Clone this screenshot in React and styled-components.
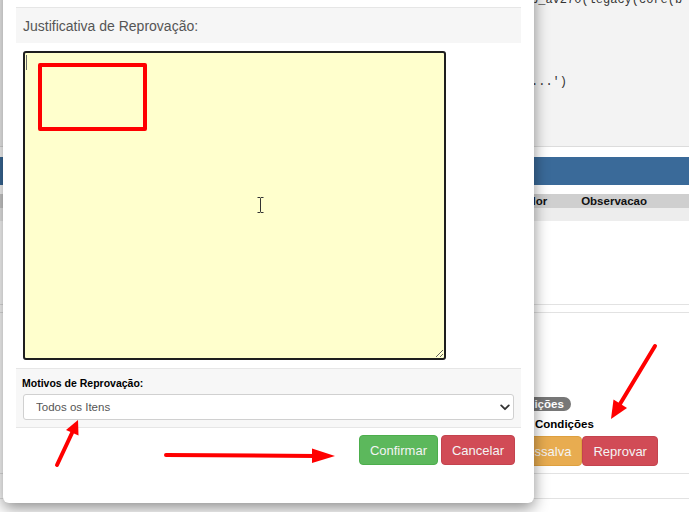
import React from 'react'
import styled, { createGlobalStyle } from 'styled-components'

const GlobalStyle = createGlobalStyle`
  html, body {
    margin: 0;
    padding: 0;
    background: #fff;
    font-family: "Liberation Sans", Arial, sans-serif;
    overflow: hidden;
  }
`

const App = () => (
  <Screen>
    <GlobalStyle />
    <Page>
      <CodePanel>
        <Code>{`b_av270(legacy(core(b\n\n\n\n\n...')`}</Code>
      </CodePanel>
      <TitleBar />
      <TableHead>
        <Th>Valor</Th>
        <Th>Observacao</Th>
      </TableHead>
      <TableRow />
      <DoubleRule />
      <BadgeRow>
        <Badge>Condições</Badge>
      </BadgeRow>
      <FieldLabel>Condições</FieldLabel>
      <ActionRow>
        <Button tone="warning">Ressalva</Button>
        <Button tone="danger">Reprovar</Button>
      </ActionRow>
      <DoubleRule tall />
    </Page>

    <Modal>
      <ModalHeader>Justificativa de Reprovação:</ModalHeader>
      <ModalBody>
        <NoteField>
          <NoteArea defaultValue="" />
          <Caret />
          <Highlight />
          <IBeam width="7" height="16" viewBox="0 0 7 16">
            <path d="M0.5 0.5h2.5l0.5 1l0.5-1h2.5M3.5 1.5v13M0.5 15.5h2.5l0.5-1l0.5 1h2.5" fill="none" stroke="#333" strokeWidth="1" />
          </IBeam>
        </NoteField>
      </ModalBody>
      <ReasonBand>
        <ReasonLabel>Motivos de Reprovação:</ReasonLabel>
        <SelectWrap>
          <Select defaultValue="todos">
            <option value="todos">Todos os Itens</option>
          </Select>
          <Chevron width="10" height="7" viewBox="0 0 10 7">
            <path d="M1.2 1.4L5 5.2l3.8-3.8" fill="none" stroke="#333" strokeWidth="1.8" strokeLinecap="round" strokeLinejoin="round" />
          </Chevron>
        </SelectWrap>
      </ReasonBand>
      <ModalFooter>
        <Button tone="success">Confirmar</Button>
        <Button tone="danger">Cancelar</Button>
      </ModalFooter>
    </Modal>

    <Arrows width="689" height="512" viewBox="0 0 689 512">
      <g stroke="#f00" strokeWidth="4" strokeLinecap="round" fill="none">
        <line x1="57" y1="465" x2="72" y2="433" />
        <line x1="166" y1="455" x2="316" y2="456" />
        <line x1="655" y1="346" x2="620" y2="404" />
      </g>
      <g fill="#f00">
        <polygon points="78,420 78.5,435.5 66,430" />
        <polygon points="335,456 312,448.5 312,463" />
        <polygon points="611,419 627,408 613.5,399.5" />
      </g>
    </Arrows>
  </Screen>
)

export default App

const Screen = styled.div`
  position: relative;
  width: 689px;
  height: 512px;
  overflow: hidden;
  background: #fff;
`

const Page = styled.div`
  display: flex;
  flex-direction: column;
  width: 100%;
`

const CodePanel = styled.div`
  height: 146px;
  background: #f3f3f3;
  border-bottom: 1px solid #dcdcdc;
  overflow: hidden;
`

const Code = styled.pre`
  margin: -8px 0 0;
  padding-left: 531px;
  font-family: "Liberation Mono", "Courier New", monospace;
  font-size: 12px;
  line-height: 16.4px;
  color: #333;
  white-space: pre;
`

const TitleBar = styled.div`
  height: 28px;
  margin-top: 10px;
  background: #3a6a99;
`

const TableHead = styled.div`
  display: flex;
  gap: 34px;
  height: 14px;
  margin-top: 9px;
  padding-left: 519px;
  background: #cfcfcf;
  align-items: center;
`

const Th = styled.span`
  font-size: 11.5px;
  font-weight: bold;
  color: #111;
`

const TableRow = styled.div`
  height: 13px;
  background: #ededed;
`

const DoubleRule = styled.div`
  height: ${p => (p.tall ? 24 : 7)}px;
  margin-top: ${p => (p.tall ? 7 : 83)}px;
  border-top: 1px solid #e2e2e2;
  border-bottom: 1px solid #e2e2e2;
`

const BadgeRow = styled.div`
  display: flex;
  margin-top: 84px;
  padding-left: 498px;
`

const Badge = styled.span`
  display: inline-flex;
  align-items: center;
  height: 14px;
  padding: 0 7px;
  border-radius: 7px;
  background: #777;
  color: #fff;
  font-size: 11.5px;
  font-weight: bold;
`

const FieldLabel = styled.div`
  margin-top: 6px;
  padding-left: 535px;
  font-size: 11.5px;
  line-height: 14px;
  font-weight: bold;
  color: #000;
`

const ActionRow = styled.div`
  display: flex;
  margin-top: 5px;
  padding-left: 507px;
`

const toneColors = {
  success: ['#5cb85c', '#4cae4c'],
  danger: ['#d14b56', '#c4434e'],
  warning: ['#e8ac50', '#dea03f'],
}

const Button = styled.button`
  height: 30px;
  padding: 0 10px;
  border: 1px solid ${p => toneColors[p.tone][1]};
  border-radius: 4px;
  background: ${p => toneColors[p.tone][0]};
  color: #f4f4f4;
  font-family: "Liberation Sans", Arial, sans-serif;
  font-size: 13px;
  cursor: pointer;
`

const Modal = styled.div`
  position: absolute;
  top: -20px;
  left: 3px;
  width: 531px;
  height: 523px;
  box-sizing: border-box;
  padding: 27px 13px 0;
  background: #fff;
  border-radius: 6px;
  box-shadow: 0 5px 15px rgba(0, 0, 0, 0.45);
  display: flex;
  flex-direction: column;
`

const ModalHeader = styled.div`
  display: flex;
  align-items: center;
  height: 35px;
  padding: 0 7px;
  border-top: 1px solid #e6e6e6;
  background: #f6f6f6;
  color: #555;
  font-size: 14px;
`

const ModalBody = styled.div`
  padding: 8px 7px;
`

const NoteField = styled.div`
  position: relative;
  width: 423px;
  height: 309px;
`

const NoteArea = styled.textarea`
  display: block;
  width: 100%;
  height: 100%;
  box-sizing: border-box;
  margin: 0;
  border: 2px solid #1e1e1e;
  border-radius: 3px;
  background: #ffffcd;
  resize: both;
  outline: none;
`

const Caret = styled.div`
  position: absolute;
  left: 3px;
  top: 4px;
  width: 1px;
  height: 15px;
  background: #666;
`

const Highlight = styled.div`
  position: absolute;
  left: 15px;
  top: 12px;
  width: 101px;
  height: 60px;
  border: 4px solid #f00;
  border-radius: 2px;
`

const IBeam = styled.svg`
  position: absolute;
  left: 234px;
  top: 146px;
`

const ReasonBand = styled.div`
  display: flex;
  flex-direction: column;
  box-sizing: border-box;
  height: 60px;
  padding: 8px 7px 0 6px;
  border-top: 1px solid #e6e6e6;
  border-bottom: 1px solid #e6e6e6;
  background: #f7f7f7;
`

const ReasonLabel = styled.div`
  font-size: 10.5px;
  line-height: 13px;
  font-weight: bold;
  color: #000;
`

const SelectWrap = styled.div`
  position: relative;
  margin: 4px 0 0 1px;
`

const Select = styled.select`
  display: block;
  width: 100%;
  height: 26px;
  padding: 0 12px;
  border: 1px solid #d0d0d0;
  border-radius: 3px;
  background: #fff;
  color: #555;
  font-family: "Liberation Sans", Arial, sans-serif;
  font-size: 11.5px;
  appearance: none;
  outline: none;
`

const Chevron = styled.svg`
  position: absolute;
  right: 4px;
  top: 10px;
  pointer-events: none;
`

const ModalFooter = styled.div`
  display: flex;
  justify-content: flex-end;
  gap: 3px;
  padding: 7px 6px 0 0;
`

const Arrows = styled.svg`
  position: absolute;
  top: 0;
  left: 0;
  pointer-events: none;
`
